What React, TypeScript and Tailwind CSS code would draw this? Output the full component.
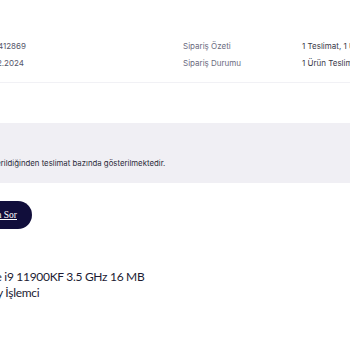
import React from "react";

export default function App() {
  return (
    <div
      className="w-[350px] h-[350px] overflow-hidden bg-white relative"
      style={{ fontFamily: "Inter, 'Noto Sans', sans-serif" }}
    >
      {/* order info */}
      <div className="pt-[40px] pb-[13px] border-b border-[#f1f1f5]">
        <div className="flex flex-col gap-[5px] text-[8px] leading-[12px] text-[#55556a]">
          <div className="flex items-center">
            <div className="w-[183px] shrink-0 whitespace-nowrap">
              <span className="inline-block -ml-[20px]">3412412869</span>
            </div>
            <div className="w-[119px] shrink-0 whitespace-nowrap text-[#6b6b80]">Sipariş Özeti</div>
            <div className="whitespace-nowrap text-[#3a3a48]">1 Teslimat, 1 Ürün</div>
          </div>
          <div className="flex items-center">
            <div className="w-[183px] shrink-0 whitespace-nowrap">
              <span className="inline-block -ml-[16px]">18.12.2024</span>
            </div>
            <div className="w-[119px] shrink-0 whitespace-nowrap text-[#6b6b80]">Sipariş Durumu</div>
            <div className="whitespace-nowrap text-[#3a3a48]">1 Ürün Teslim Edildi</div>
          </div>
        </div>
      </div>

      {/* info band */}
      <div className="mt-[40px] h-[60px] bg-[#f0eff4] flex items-end pb-[15px]">
        <div className="whitespace-nowrap text-[7.8px] leading-[10px] text-[#2b2b3a]">
          <span className="inline-block -ml-[203px]">
            Siparişleriniz farklı satıcılardan ya da depolardan gönderildiğinden teslimat bazında gösterilmektedir.
          </span>
        </div>
      </div>

      {/* button */}
      <div className="mt-[18px]">
        <div className="-ml-[70px] w-[102px] h-[28px] rounded-full bg-[#110e3b] flex items-center justify-end pr-[15px]">
          <span
            className="text-white text-[9.5px] underline whitespace-nowrap"
            style={{ fontFamily: "'Liberation Serif', serif" }}
          >
            Satıcıdan Sor
          </span>
        </div>
      </div>

      {/* product */}
      <div
        className="mt-[40px] -ml-[47px] w-[230px] text-[12px] leading-[16px] tracking-[-0.3px] text-[#1c1b33]"
        style={{ fontFamily: "Lato, 'Noto Sans', sans-serif" }}
      >
        Intel Core i9 11900KF 3.5 GHz 16 MB
        <br />
        1200 Tray İşlemci
      </div>
    </div>
  );
}
